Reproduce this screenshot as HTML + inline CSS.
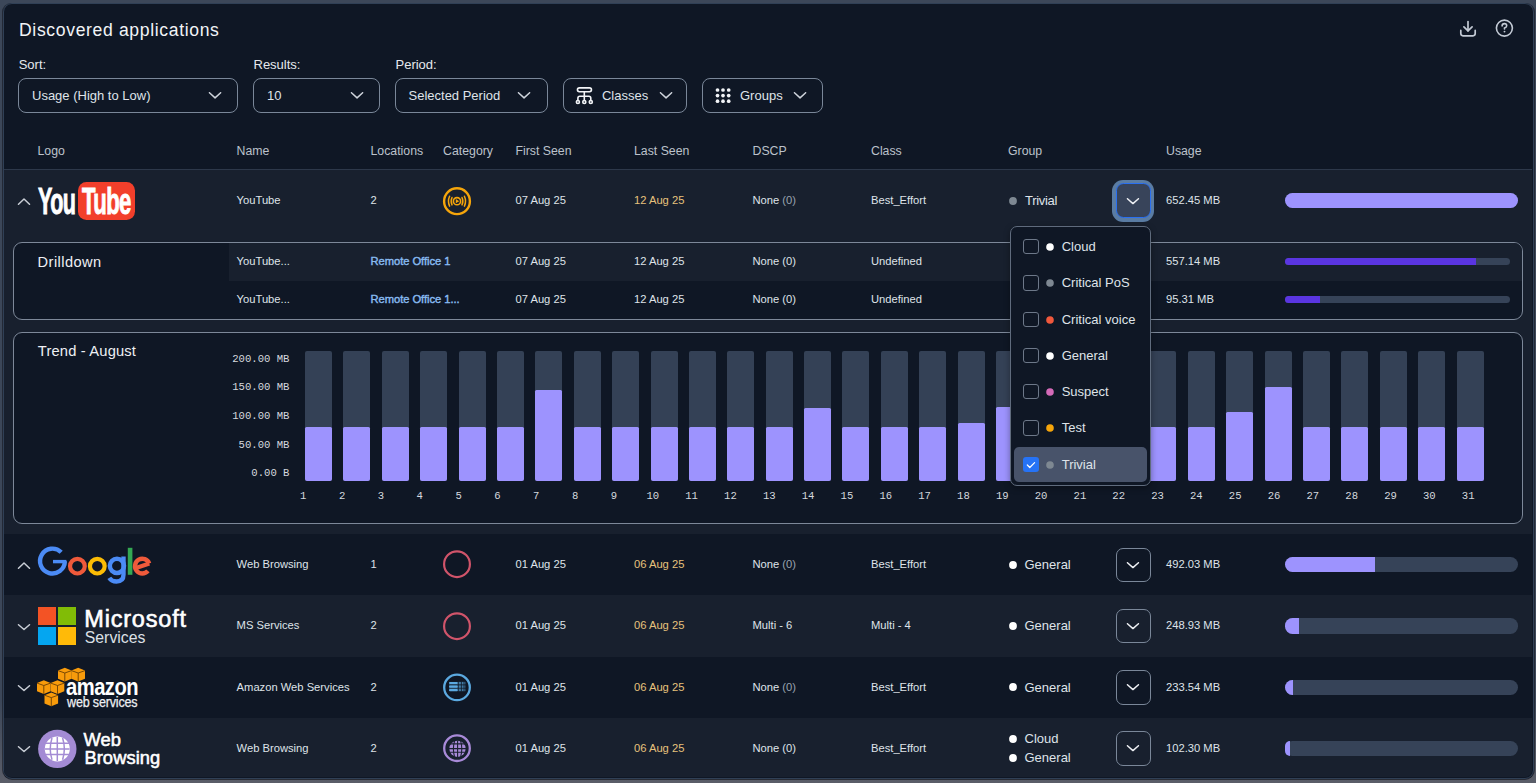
<!DOCTYPE html><html><head><meta charset="utf-8"><style>
html,body{margin:0;padding:0;}
body{width:1536px;height:783px;overflow:hidden;position:relative;background:linear-gradient(#3c4759 0px,#3c4759 700px,#5a5d68 783px);font-family:"Liberation Sans",sans-serif;}
.t{position:absolute;white-space:nowrap;}
.b{position:absolute;}
</style></head><body>
<div class="b" style="left:3px;top:3px;width:1530px;height:776px;background:#0f1725;border:1px solid #304056;border-radius:9px;box-sizing:border-box;width:1531px;height:776px;box-shadow:0 1px 0 rgba(10,12,20,0.6),1px 0 0 rgba(10,12,20,0.5),-1px 0 0 rgba(10,12,20,0.5);"></div>
<div class="t" style="left:19.00px;top:22.10px;font-size:17.6px;line-height:17.6px;color:#f2f4f7;font-weight:400;font-family:'Liberation Sans', sans-serif;letter-spacing:0.64px;">Discovered applications</div>
<svg class="b" style="left:1456px;top:17px;" width="24" height="24" viewBox="0 0 24 24"><g fill="none" stroke="#c3cad5" stroke-width="1.7" stroke-linecap="round" stroke-linejoin="round"><path d="M12 4.6 V13.8"/><path d="M7.9 9.9 L12 13.9 L16.1 9.9"/><path d="M4.8 13.4 V16.6 Q4.8 18.8 7 18.8 H17 Q19.2 18.8 19.2 16.6 V13.4"/></g></svg>
<svg class="b" style="left:1492px;top:16.4px;" width="24" height="24" viewBox="0 0 24 24"><g fill="none" stroke="#c3cad5" stroke-width="1.6" stroke-linecap="round"><circle cx="12.4" cy="12.1" r="8"/><path d="M10.1 9.9 Q10.1 7.6 12.4 7.6 Q14.7 7.6 14.7 9.7 Q14.7 11.2 12.5 12.1 V12.9"/></g><circle cx="12.5" cy="15.6" r="0.95" fill="#c3cad5"/></svg>
<div class="t" style="left:18.70px;top:58.00px;font-size:13px;line-height:13px;color:#e6e9ee;font-weight:400;font-family:'Liberation Sans', sans-serif;">Sort:</div>
<div class="t" style="left:253.50px;top:58.00px;font-size:13px;line-height:13px;color:#e6e9ee;font-weight:400;font-family:'Liberation Sans', sans-serif;">Results:</div>
<div class="t" style="left:395.50px;top:58.00px;font-size:13px;line-height:13px;color:#e6e9ee;font-weight:400;font-family:'Liberation Sans', sans-serif;">Period:</div>
<div class="b" style="left:18px;top:78px;width:220px;height:34.5px;border:1px solid #7a8799;border-radius:8px;box-sizing:border-box;"></div>
<div class="t" style="left:32.00px;top:88.80px;font-size:13px;line-height:13px;color:#dfe3e9;font-weight:400;font-family:'Liberation Sans', sans-serif;">Usage (High to Low)</div>
<svg class="b" style="left:208.15px;top:92.25px" width="14.1" height="7.3500000000000005" viewBox="0 0 14.1 7.3500000000000005"><path d="M1.45 0.725 L7.05 5.9 L12.649999999999999 0.725" fill="none" stroke="#cfd4dc" stroke-width="1.45" stroke-linecap="round" stroke-linejoin="round"/></svg>
<div class="b" style="left:253.4px;top:78px;width:126.5px;height:34.5px;border:1px solid #7a8799;border-radius:8px;box-sizing:border-box;"></div>
<div class="t" style="left:267.00px;top:88.80px;font-size:13px;line-height:13px;color:#dfe3e9;font-weight:400;font-family:'Liberation Sans', sans-serif;">10</div>
<svg class="b" style="left:349.75px;top:92.25px" width="14.1" height="7.3500000000000005" viewBox="0 0 14.1 7.3500000000000005"><path d="M1.45 0.725 L7.05 5.9 L12.649999999999999 0.725" fill="none" stroke="#cfd4dc" stroke-width="1.45" stroke-linecap="round" stroke-linejoin="round"/></svg>
<div class="b" style="left:395px;top:78px;width:152.6px;height:34.5px;border:1px solid #7a8799;border-radius:8px;box-sizing:border-box;"></div>
<div class="t" style="left:408.50px;top:88.80px;font-size:13px;line-height:13px;color:#dfe3e9;font-weight:400;font-family:'Liberation Sans', sans-serif;">Selected Period</div>
<svg class="b" style="left:517.15px;top:92.25px" width="14.1" height="7.3500000000000005" viewBox="0 0 14.1 7.3500000000000005"><path d="M1.45 0.725 L7.05 5.9 L12.649999999999999 0.725" fill="none" stroke="#cfd4dc" stroke-width="1.45" stroke-linecap="round" stroke-linejoin="round"/></svg>
<div class="b" style="left:563px;top:78px;width:124px;height:34.5px;border:1px solid #7a8799;border-radius:8px;box-sizing:border-box;"></div>
<div class="t" style="left:601.90px;top:88.80px;font-size:13px;line-height:13px;color:#dfe3e9;font-weight:400;font-family:'Liberation Sans', sans-serif;">Classes</div>
<svg class="b" style="left:658.95px;top:92.25px" width="14.1" height="7.3500000000000005" viewBox="0 0 14.1 7.3500000000000005"><path d="M1.45 0.725 L7.05 5.9 L12.649999999999999 0.725" fill="none" stroke="#cfd4dc" stroke-width="1.45" stroke-linecap="round" stroke-linejoin="round"/></svg>
<div class="b" style="left:702px;top:78px;width:120.6px;height:34.5px;border:1px solid #7a8799;border-radius:8px;box-sizing:border-box;"></div>
<div class="t" style="left:740.00px;top:88.80px;font-size:13px;line-height:13px;color:#dfe3e9;font-weight:400;font-family:'Liberation Sans', sans-serif;">Groups</div>
<svg class="b" style="left:792.95px;top:92.25px" width="14.1" height="7.3500000000000005" viewBox="0 0 14.1 7.3500000000000005"><path d="M1.45 0.725 L7.05 5.9 L12.649999999999999 0.725" fill="none" stroke="#cfd4dc" stroke-width="1.45" stroke-linecap="round" stroke-linejoin="round"/></svg>
<svg class="b" style="left:572px;top:83px;" width="24" height="24" viewBox="0 0 24 24"><g fill="none" stroke="#f2f4f7" stroke-width="1.6" stroke-linecap="round" stroke-linejoin="round"><rect x="5.45" y="4.85" width="14" height="3.9" rx="1.95"/><path d="M12.3 8.8 V17.4"/><path d="M5.9 17.4 V15.2 Q5.9 13.3 7.8 13.3 H16.9 Q18.8 13.3 18.8 15.2 V17.4"/><circle cx="5.9" cy="19" r="1.55"/><circle cx="12.3" cy="19" r="1.55"/><circle cx="18.8" cy="19" r="1.55"/></g></svg>
<svg class="b" style="left:712px;top:82px;" width="24" height="24" viewBox="0 0 24 24"><circle cx="5.5" cy="8" r="1.85" fill="#f2f4f7"/><circle cx="5.5" cy="13.6" r="1.85" fill="#f2f4f7"/><circle cx="5.5" cy="19.2" r="1.85" fill="#f2f4f7"/><circle cx="11" cy="8" r="1.85" fill="#f2f4f7"/><circle cx="11" cy="13.6" r="1.85" fill="#f2f4f7"/><circle cx="11" cy="19.2" r="1.85" fill="#f2f4f7"/><circle cx="16.7" cy="8" r="1.85" fill="#f2f4f7"/><circle cx="16.7" cy="13.6" r="1.85" fill="#f2f4f7"/><circle cx="16.7" cy="19.2" r="1.85" fill="#f2f4f7"/></svg>
<div class="t" style="left:37.50px;top:144.89px;font-size:12.3px;line-height:12.3px;color:#bcc2cb;font-weight:400;font-family:'Liberation Sans', sans-serif;">Logo</div>
<div class="t" style="left:236.60px;top:144.89px;font-size:12.3px;line-height:12.3px;color:#bcc2cb;font-weight:400;font-family:'Liberation Sans', sans-serif;">Name</div>
<div class="t" style="left:370.50px;top:144.89px;font-size:12.3px;line-height:12.3px;color:#bcc2cb;font-weight:400;font-family:'Liberation Sans', sans-serif;">Locations</div>
<div class="t" style="left:443.10px;top:144.89px;font-size:12.3px;line-height:12.3px;color:#bcc2cb;font-weight:400;font-family:'Liberation Sans', sans-serif;">Category</div>
<div class="t" style="left:515.50px;top:144.89px;font-size:12.3px;line-height:12.3px;color:#bcc2cb;font-weight:400;font-family:'Liberation Sans', sans-serif;">First Seen</div>
<div class="t" style="left:634.00px;top:144.89px;font-size:12.3px;line-height:12.3px;color:#bcc2cb;font-weight:400;font-family:'Liberation Sans', sans-serif;">Last Seen</div>
<div class="t" style="left:752.50px;top:144.89px;font-size:12.3px;line-height:12.3px;color:#bcc2cb;font-weight:400;font-family:'Liberation Sans', sans-serif;">DSCP</div>
<div class="t" style="left:871.00px;top:144.89px;font-size:12.3px;line-height:12.3px;color:#bcc2cb;font-weight:400;font-family:'Liberation Sans', sans-serif;">Class</div>
<div class="t" style="left:1008.00px;top:144.89px;font-size:12.3px;line-height:12.3px;color:#bcc2cb;font-weight:400;font-family:'Liberation Sans', sans-serif;">Group</div>
<div class="t" style="left:1166.00px;top:144.89px;font-size:12.3px;line-height:12.3px;color:#bcc2cb;font-weight:400;font-family:'Liberation Sans', sans-serif;">Usage</div>
<div class="b" style="left:4px;top:169px;width:1528px;height:1px;background:#2d384a;"></div>
<div class="b" style="left:4px;top:170px;width:1528px;height:364px;background:#18202e;"></div>
<div class="b" style="left:4px;top:534px;width:1528px;height:61px;background:#0f1725;"></div>
<div class="b" style="left:4px;top:595px;width:1528px;height:62px;background:#18202e;"></div>
<div class="b" style="left:4px;top:657px;width:1528px;height:61px;background:#0f1725;"></div>
<div class="b" style="left:4px;top:718px;width:1528px;height:59px;background:#18202e;border-radius:0 0 7px 7px;"></div>
<svg class="b" style="left:17.00px;top:198.25px" width="14.0" height="7.0" viewBox="0 0 14.0 7.0"><path d="M1.5 6.25 L7.0 1.05 L12.5 6.25" fill="none" stroke="#c9ced6" stroke-width="1.5" stroke-linecap="round" stroke-linejoin="round"/></svg>
<div class="t" style="left:37.60px;top:183.73px;font-size:36px;line-height:36px;color:#ffffff;font-weight:700;font-family:'Liberation Sans', sans-serif;transform:scaleX(0.6);transform-origin:0 0;letter-spacing:-1px;-webkit-text-stroke:0.9px #fff;">You</div>
<div class="b" style="left:77.9px;top:181.5px;width:57px;height:38.4px;background:#f23f2b;border-radius:8.5px;"></div>
<div class="t" style="left:82.00px;top:183.53px;font-size:36px;line-height:36px;color:#ffffff;font-weight:700;font-family:'Liberation Sans', sans-serif;transform:scaleX(0.615);transform-origin:0 0;letter-spacing:-1px;-webkit-text-stroke:0.9px #fff;">Tube</div>
<div class="t" style="left:236.60px;top:195.22px;font-size:11.2px;line-height:11.2px;color:#dfe3e9;font-weight:400;font-family:'Liberation Sans', sans-serif;">YouTube</div>
<div class="t" style="left:370.50px;top:195.22px;font-size:11.2px;line-height:11.2px;color:#dfe3e9;font-weight:400;font-family:'Liberation Sans', sans-serif;">2</div>
<div class="t" style="left:515.50px;top:195.22px;font-size:11.2px;line-height:11.2px;color:#dfe3e9;font-weight:400;font-family:'Liberation Sans', sans-serif;">07 Aug 25</div>
<div class="t" style="left:634.00px;top:195.22px;font-size:11.2px;line-height:11.2px;color:#e6c27c;font-weight:400;font-family:'Liberation Sans', sans-serif;">12 Aug 25</div>
<div class="t" style="left:752.50px;top:195.22px;font-size:11.2px;line-height:11.2px;color:#dfe3e9;font-weight:400;font-family:'Liberation Sans', sans-serif;">None <span style="color:#9aa3af">(0)</span></div>
<div class="t" style="left:871.00px;top:195.22px;font-size:11.2px;line-height:11.2px;color:#dfe3e9;font-weight:400;font-family:'Liberation Sans', sans-serif;">Best_Effort</div>
<div class="t" style="left:1166.00px;top:195.22px;font-size:11.2px;line-height:11.2px;color:#dfe3e9;font-weight:400;font-family:'Liberation Sans', sans-serif;">652.45 MB</div>
<svg class="b" style="left:441px;top:184.5px;" width="32" height="32" viewBox="0 0 32 32"><g fill="none" stroke="#f5a50b"><circle cx="16" cy="16.2" r="12.9" stroke-width="2.4"/><circle cx="16" cy="16.2" r="3.6" stroke-width="1.6"/><path d="M11 12.5 Q9.2 16.2 11 19.9" stroke-width="1.5" stroke-linecap="round"/><path d="M21 12.5 Q22.8 16.2 21 19.9" stroke-width="1.5" stroke-linecap="round"/><path d="M8.6 11.3 Q6.3 16.2 8.6 21.1" stroke-width="1.5" stroke-linecap="round"/><path d="M23.4 11.3 Q25.7 16.2 23.4 21.1" stroke-width="1.5" stroke-linecap="round"/></g><path d="M14.8 14.1 L18.2 16.2 L14.8 18.3 Z" fill="#f5a50b"/></svg>
<svg class="b" style="left:1007px;top:194.7px" width="12" height="12"><circle cx="6" cy="6" r="3.9" fill="#7e8892"/></svg>
<div class="t" style="left:1025.00px;top:194.00px;font-size:13px;line-height:13px;color:#dfe3e9;font-weight:400;font-family:'Liberation Sans', sans-serif;letter-spacing:-0.3px;">Trivial</div>
<div class="b" style="left:1112.3px;top:179.8px;width:42px;height:42px;background:#5a7ca3;border-radius:11px;"></div>
<div class="b" style="left:1116px;top:183.2px;width:34.8px;height:34.8px;background:#38445a;border:1.6px solid #2a70f2;border-radius:7.5px;box-sizing:border-box;"></div>
<svg class="b" style="left:1126.25px;top:198.00px" width="13.9" height="7.05" viewBox="0 0 13.9 7.05"><path d="M1.45 0.725 L6.95 5.6 L12.45 0.725" fill="none" stroke="#eef0f4" stroke-width="1.45" stroke-linecap="round" stroke-linejoin="round"/></svg>
<div class="b" style="left:1284.5px;top:193.0px;width:233.70000000000005px;height:15.2px;background:#364358;border-radius:7.6px;overflow:hidden;"></div>
<div class="b" style="left:1284.5px;top:193.0px;width:233.70000000000005px;height:15.2px;background:#9d93fe;border-radius:7.6px 0 0 7.6px;border-radius:7.6px;"></div>
<div class="b" style="left:13px;top:242px;width:1510px;height:78px;background:#0f1725;border:1px solid #7d8899;border-radius:9px;box-sizing:border-box;"></div>
<div class="b" style="left:228.5px;top:243px;width:1293.5px;height:38px;background:#18202e;border-radius:0 8px 0 0;"></div>
<div class="t" style="left:37.60px;top:254.94px;font-size:14.6px;line-height:14.6px;color:#eef0f4;font-weight:400;font-family:'Liberation Sans', sans-serif;letter-spacing:0.45px;">Drilldown</div>
<div class="t" style="left:236.60px;top:256.02px;font-size:11.2px;line-height:11.2px;color:#dfe3e9;font-weight:400;font-family:'Liberation Sans', sans-serif;">YouTube...</div>
<div class="t" style="left:370.50px;top:256.02px;font-size:11.2px;line-height:11.2px;color:#88bbf1;font-weight:400;font-family:'Liberation Sans', sans-serif;letter-spacing:-0.05px;-webkit-text-stroke:0.4px #88bbf1;">Remote Office 1</div>
<div class="t" style="left:515.50px;top:256.02px;font-size:11.2px;line-height:11.2px;color:#dfe3e9;font-weight:400;font-family:'Liberation Sans', sans-serif;">07 Aug 25</div>
<div class="t" style="left:634.00px;top:256.02px;font-size:11.2px;line-height:11.2px;color:#dfe3e9;font-weight:400;font-family:'Liberation Sans', sans-serif;">12 Aug 25</div>
<div class="t" style="left:752.50px;top:256.02px;font-size:11.2px;line-height:11.2px;color:#dfe3e9;font-weight:400;font-family:'Liberation Sans', sans-serif;">None (0)</div>
<div class="t" style="left:871.00px;top:256.02px;font-size:11.2px;line-height:11.2px;color:#dfe3e9;font-weight:400;font-family:'Liberation Sans', sans-serif;">Undefined</div>
<div class="t" style="left:1166.00px;top:256.02px;font-size:11.2px;line-height:11.2px;color:#dfe3e9;font-weight:400;font-family:'Liberation Sans', sans-serif;">557.14 MB</div>
<div class="b" style="left:1284.8px;top:257.6px;width:225.5px;height:7.8px;background:#364358;border-radius:4px;"></div>
<div class="b" style="left:1284.8px;top:257.6px;width:191.20000000000005px;height:7.8px;background:#5a35e1;border-radius:4px 0 0 4px;"></div>
<div class="t" style="left:236.60px;top:294.02px;font-size:11.2px;line-height:11.2px;color:#dfe3e9;font-weight:400;font-family:'Liberation Sans', sans-serif;">YouTube...</div>
<div class="t" style="left:370.50px;top:294.02px;font-size:11.2px;line-height:11.2px;color:#88bbf1;font-weight:400;font-family:'Liberation Sans', sans-serif;letter-spacing:-0.05px;-webkit-text-stroke:0.4px #88bbf1;">Remote Office 1...</div>
<div class="t" style="left:515.50px;top:294.02px;font-size:11.2px;line-height:11.2px;color:#dfe3e9;font-weight:400;font-family:'Liberation Sans', sans-serif;">07 Aug 25</div>
<div class="t" style="left:634.00px;top:294.02px;font-size:11.2px;line-height:11.2px;color:#dfe3e9;font-weight:400;font-family:'Liberation Sans', sans-serif;">12 Aug 25</div>
<div class="t" style="left:752.50px;top:294.02px;font-size:11.2px;line-height:11.2px;color:#dfe3e9;font-weight:400;font-family:'Liberation Sans', sans-serif;">None (0)</div>
<div class="t" style="left:871.00px;top:294.02px;font-size:11.2px;line-height:11.2px;color:#dfe3e9;font-weight:400;font-family:'Liberation Sans', sans-serif;">Undefined</div>
<div class="t" style="left:1166.00px;top:294.02px;font-size:11.2px;line-height:11.2px;color:#dfe3e9;font-weight:400;font-family:'Liberation Sans', sans-serif;">95.31 MB</div>
<div class="b" style="left:1284.8px;top:295.6px;width:225.5px;height:7.8px;background:#364358;border-radius:4px;"></div>
<div class="b" style="left:1284.8px;top:295.6px;width:35.200000000000045px;height:7.8px;background:#5a35e1;border-radius:4px 0 0 4px;"></div>
<div class="b" style="left:13px;top:331.5px;width:1510px;height:192.5px;background:#0f1725;border:1px solid #7d8899;border-radius:9px;box-sizing:border-box;"></div>
<div class="t" style="left:37.80px;top:344.16px;font-size:14.7px;line-height:14.7px;color:#eef0f4;font-weight:400;font-family:'Liberation Sans', sans-serif;letter-spacing:0.18px;">Trend - August</div>
<div class="t" style="left:232.26px;top:353.73px;font-size:10.6px;line-height:10.6px;color:#d5d9df;font-weight:400;font-family:'Liberation Mono', monospace;">200.00 MB</div>
<div class="t" style="left:232.26px;top:382.38px;font-size:10.6px;line-height:10.6px;color:#d5d9df;font-weight:400;font-family:'Liberation Mono', monospace;">150.00 MB</div>
<div class="t" style="left:232.26px;top:411.03px;font-size:10.6px;line-height:10.6px;color:#d5d9df;font-weight:400;font-family:'Liberation Mono', monospace;">100.00 MB</div>
<div class="t" style="left:238.62px;top:439.68px;font-size:10.6px;line-height:10.6px;color:#d5d9df;font-weight:400;font-family:'Liberation Mono', monospace;">50.00 MB</div>
<div class="t" style="left:251.34px;top:468.33px;font-size:10.6px;line-height:10.6px;color:#d5d9df;font-weight:400;font-family:'Liberation Mono', monospace;">0.00 B</div>
<div class="b" style="left:305.1px;top:350.9px;width:27px;height:129.8px;background:#344156;border-radius:2px;"></div>
<div class="b" style="left:305.1px;top:427.3px;width:27px;height:53.39999999999998px;background:#9d93fe;border-radius:1.5px 1.5px 2px 2px;"></div>
<div class="t" style="left:300.12px;top:491.43px;font-size:10.6px;line-height:10.6px;color:#d5d9df;font-weight:400;font-family:'Liberation Mono', monospace;">1</div>
<div class="b" style="left:343.48px;top:350.9px;width:27px;height:129.8px;background:#344156;border-radius:2px;"></div>
<div class="b" style="left:343.48px;top:427.3px;width:27px;height:53.39999999999998px;background:#9d93fe;border-radius:1.5px 1.5px 2px 2px;"></div>
<div class="t" style="left:338.95px;top:491.43px;font-size:10.6px;line-height:10.6px;color:#d5d9df;font-weight:400;font-family:'Liberation Mono', monospace;">2</div>
<div class="b" style="left:381.86px;top:350.9px;width:27px;height:129.8px;background:#344156;border-radius:2px;"></div>
<div class="b" style="left:381.86px;top:427.3px;width:27px;height:53.39999999999998px;background:#9d93fe;border-radius:1.5px 1.5px 2px 2px;"></div>
<div class="t" style="left:377.78px;top:491.43px;font-size:10.6px;line-height:10.6px;color:#d5d9df;font-weight:400;font-family:'Liberation Mono', monospace;">3</div>
<div class="b" style="left:420.24px;top:350.9px;width:27px;height:129.8px;background:#344156;border-radius:2px;"></div>
<div class="b" style="left:420.24px;top:427.3px;width:27px;height:53.39999999999998px;background:#9d93fe;border-radius:1.5px 1.5px 2px 2px;"></div>
<div class="t" style="left:416.61px;top:491.43px;font-size:10.6px;line-height:10.6px;color:#d5d9df;font-weight:400;font-family:'Liberation Mono', monospace;">4</div>
<div class="b" style="left:458.62px;top:350.9px;width:27px;height:129.8px;background:#344156;border-radius:2px;"></div>
<div class="b" style="left:458.62px;top:427.3px;width:27px;height:53.39999999999998px;background:#9d93fe;border-radius:1.5px 1.5px 2px 2px;"></div>
<div class="t" style="left:455.44px;top:491.43px;font-size:10.6px;line-height:10.6px;color:#d5d9df;font-weight:400;font-family:'Liberation Mono', monospace;">5</div>
<div class="b" style="left:497.0px;top:350.9px;width:27px;height:129.8px;background:#344156;border-radius:2px;"></div>
<div class="b" style="left:497.0px;top:427.3px;width:27px;height:53.39999999999998px;background:#9d93fe;border-radius:1.5px 1.5px 2px 2px;"></div>
<div class="t" style="left:494.27px;top:491.43px;font-size:10.6px;line-height:10.6px;color:#d5d9df;font-weight:400;font-family:'Liberation Mono', monospace;">6</div>
<div class="b" style="left:535.38px;top:350.9px;width:27px;height:129.8px;background:#344156;border-radius:2px;"></div>
<div class="b" style="left:535.38px;top:389.8px;width:27px;height:90.89999999999998px;background:#9d93fe;border-radius:1.5px 1.5px 2px 2px;"></div>
<div class="t" style="left:533.10px;top:491.43px;font-size:10.6px;line-height:10.6px;color:#d5d9df;font-weight:400;font-family:'Liberation Mono', monospace;">7</div>
<div class="b" style="left:573.76px;top:350.9px;width:27px;height:129.8px;background:#344156;border-radius:2px;"></div>
<div class="b" style="left:573.76px;top:427.3px;width:27px;height:53.39999999999998px;background:#9d93fe;border-radius:1.5px 1.5px 2px 2px;"></div>
<div class="t" style="left:571.93px;top:491.43px;font-size:10.6px;line-height:10.6px;color:#d5d9df;font-weight:400;font-family:'Liberation Mono', monospace;">8</div>
<div class="b" style="left:612.14px;top:350.9px;width:27px;height:129.8px;background:#344156;border-radius:2px;"></div>
<div class="b" style="left:612.14px;top:427.3px;width:27px;height:53.39999999999998px;background:#9d93fe;border-radius:1.5px 1.5px 2px 2px;"></div>
<div class="t" style="left:610.76px;top:491.43px;font-size:10.6px;line-height:10.6px;color:#d5d9df;font-weight:400;font-family:'Liberation Mono', monospace;">9</div>
<div class="b" style="left:650.52px;top:350.9px;width:27px;height:129.8px;background:#344156;border-radius:2px;"></div>
<div class="b" style="left:650.52px;top:427.3px;width:27px;height:53.39999999999998px;background:#9d93fe;border-radius:1.5px 1.5px 2px 2px;"></div>
<div class="t" style="left:646.41px;top:491.43px;font-size:10.6px;line-height:10.6px;color:#d5d9df;font-weight:400;font-family:'Liberation Mono', monospace;">10</div>
<div class="b" style="left:688.9px;top:350.9px;width:27px;height:129.8px;background:#344156;border-radius:2px;"></div>
<div class="b" style="left:688.9px;top:427.3px;width:27px;height:53.39999999999998px;background:#9d93fe;border-radius:1.5px 1.5px 2px 2px;"></div>
<div class="t" style="left:685.24px;top:491.43px;font-size:10.6px;line-height:10.6px;color:#d5d9df;font-weight:400;font-family:'Liberation Mono', monospace;">11</div>
<div class="b" style="left:727.28px;top:350.9px;width:27px;height:129.8px;background:#344156;border-radius:2px;"></div>
<div class="b" style="left:727.28px;top:427.3px;width:27px;height:53.39999999999998px;background:#9d93fe;border-radius:1.5px 1.5px 2px 2px;"></div>
<div class="t" style="left:724.07px;top:491.43px;font-size:10.6px;line-height:10.6px;color:#d5d9df;font-weight:400;font-family:'Liberation Mono', monospace;">12</div>
<div class="b" style="left:765.66px;top:350.9px;width:27px;height:129.8px;background:#344156;border-radius:2px;"></div>
<div class="b" style="left:765.66px;top:427.3px;width:27px;height:53.39999999999998px;background:#9d93fe;border-radius:1.5px 1.5px 2px 2px;"></div>
<div class="t" style="left:762.90px;top:491.43px;font-size:10.6px;line-height:10.6px;color:#d5d9df;font-weight:400;font-family:'Liberation Mono', monospace;">13</div>
<div class="b" style="left:804.04px;top:350.9px;width:27px;height:129.8px;background:#344156;border-radius:2px;"></div>
<div class="b" style="left:804.04px;top:408px;width:27px;height:72.69999999999999px;background:#9d93fe;border-radius:1.5px 1.5px 2px 2px;"></div>
<div class="t" style="left:801.73px;top:491.43px;font-size:10.6px;line-height:10.6px;color:#d5d9df;font-weight:400;font-family:'Liberation Mono', monospace;">14</div>
<div class="b" style="left:842.42px;top:350.9px;width:27px;height:129.8px;background:#344156;border-radius:2px;"></div>
<div class="b" style="left:842.42px;top:427.3px;width:27px;height:53.39999999999998px;background:#9d93fe;border-radius:1.5px 1.5px 2px 2px;"></div>
<div class="t" style="left:840.56px;top:491.43px;font-size:10.6px;line-height:10.6px;color:#d5d9df;font-weight:400;font-family:'Liberation Mono', monospace;">15</div>
<div class="b" style="left:880.8px;top:350.9px;width:27px;height:129.8px;background:#344156;border-radius:2px;"></div>
<div class="b" style="left:880.8px;top:427.3px;width:27px;height:53.39999999999998px;background:#9d93fe;border-radius:1.5px 1.5px 2px 2px;"></div>
<div class="t" style="left:879.39px;top:491.43px;font-size:10.6px;line-height:10.6px;color:#d5d9df;font-weight:400;font-family:'Liberation Mono', monospace;">16</div>
<div class="b" style="left:919.18px;top:350.9px;width:27px;height:129.8px;background:#344156;border-radius:2px;"></div>
<div class="b" style="left:919.18px;top:427.3px;width:27px;height:53.39999999999998px;background:#9d93fe;border-radius:1.5px 1.5px 2px 2px;"></div>
<div class="t" style="left:918.22px;top:491.43px;font-size:10.6px;line-height:10.6px;color:#d5d9df;font-weight:400;font-family:'Liberation Mono', monospace;">17</div>
<div class="b" style="left:957.56px;top:350.9px;width:27px;height:129.8px;background:#344156;border-radius:2px;"></div>
<div class="b" style="left:957.56px;top:423.3px;width:27px;height:57.39999999999998px;background:#9d93fe;border-radius:1.5px 1.5px 2px 2px;"></div>
<div class="t" style="left:957.05px;top:491.43px;font-size:10.6px;line-height:10.6px;color:#d5d9df;font-weight:400;font-family:'Liberation Mono', monospace;">18</div>
<div class="b" style="left:995.94px;top:350.9px;width:27px;height:129.8px;background:#344156;border-radius:2px;"></div>
<div class="b" style="left:995.94px;top:407px;width:27px;height:73.69999999999999px;background:#9d93fe;border-radius:1.5px 1.5px 2px 2px;"></div>
<div class="t" style="left:995.88px;top:491.43px;font-size:10.6px;line-height:10.6px;color:#d5d9df;font-weight:400;font-family:'Liberation Mono', monospace;">19</div>
<div class="b" style="left:1034.32px;top:350.9px;width:27px;height:129.8px;background:#344156;border-radius:2px;"></div>
<div class="b" style="left:1034.32px;top:427.3px;width:27px;height:53.39999999999998px;background:#9d93fe;border-radius:1.5px 1.5px 2px 2px;"></div>
<div class="t" style="left:1034.71px;top:491.43px;font-size:10.6px;line-height:10.6px;color:#d5d9df;font-weight:400;font-family:'Liberation Mono', monospace;">20</div>
<div class="b" style="left:1072.7px;top:350.9px;width:27px;height:129.8px;background:#344156;border-radius:2px;"></div>
<div class="b" style="left:1072.7px;top:427.3px;width:27px;height:53.39999999999998px;background:#9d93fe;border-radius:1.5px 1.5px 2px 2px;"></div>
<div class="t" style="left:1073.54px;top:491.43px;font-size:10.6px;line-height:10.6px;color:#d5d9df;font-weight:400;font-family:'Liberation Mono', monospace;">21</div>
<div class="b" style="left:1111.08px;top:350.9px;width:27px;height:129.8px;background:#344156;border-radius:2px;"></div>
<div class="b" style="left:1111.08px;top:427.3px;width:27px;height:53.39999999999998px;background:#9d93fe;border-radius:1.5px 1.5px 2px 2px;"></div>
<div class="t" style="left:1112.37px;top:491.43px;font-size:10.6px;line-height:10.6px;color:#d5d9df;font-weight:400;font-family:'Liberation Mono', monospace;">22</div>
<div class="b" style="left:1149.46px;top:350.9px;width:27px;height:129.8px;background:#344156;border-radius:2px;"></div>
<div class="b" style="left:1149.46px;top:427.3px;width:27px;height:53.39999999999998px;background:#9d93fe;border-radius:1.5px 1.5px 2px 2px;"></div>
<div class="t" style="left:1151.20px;top:491.43px;font-size:10.6px;line-height:10.6px;color:#d5d9df;font-weight:400;font-family:'Liberation Mono', monospace;">23</div>
<div class="b" style="left:1187.84px;top:350.9px;width:27px;height:129.8px;background:#344156;border-radius:2px;"></div>
<div class="b" style="left:1187.84px;top:427.3px;width:27px;height:53.39999999999998px;background:#9d93fe;border-radius:1.5px 1.5px 2px 2px;"></div>
<div class="t" style="left:1190.03px;top:491.43px;font-size:10.6px;line-height:10.6px;color:#d5d9df;font-weight:400;font-family:'Liberation Mono', monospace;">24</div>
<div class="b" style="left:1226.22px;top:350.9px;width:27px;height:129.8px;background:#344156;border-radius:2px;"></div>
<div class="b" style="left:1226.22px;top:412px;width:27px;height:68.69999999999999px;background:#9d93fe;border-radius:1.5px 1.5px 2px 2px;"></div>
<div class="t" style="left:1228.86px;top:491.43px;font-size:10.6px;line-height:10.6px;color:#d5d9df;font-weight:400;font-family:'Liberation Mono', monospace;">25</div>
<div class="b" style="left:1264.6px;top:350.9px;width:27px;height:129.8px;background:#344156;border-radius:2px;"></div>
<div class="b" style="left:1264.6px;top:387px;width:27px;height:93.69999999999999px;background:#9d93fe;border-radius:1.5px 1.5px 2px 2px;"></div>
<div class="t" style="left:1267.69px;top:491.43px;font-size:10.6px;line-height:10.6px;color:#d5d9df;font-weight:400;font-family:'Liberation Mono', monospace;">26</div>
<div class="b" style="left:1302.98px;top:350.9px;width:27px;height:129.8px;background:#344156;border-radius:2px;"></div>
<div class="b" style="left:1302.98px;top:427.3px;width:27px;height:53.39999999999998px;background:#9d93fe;border-radius:1.5px 1.5px 2px 2px;"></div>
<div class="t" style="left:1306.52px;top:491.43px;font-size:10.6px;line-height:10.6px;color:#d5d9df;font-weight:400;font-family:'Liberation Mono', monospace;">27</div>
<div class="b" style="left:1341.36px;top:350.9px;width:27px;height:129.8px;background:#344156;border-radius:2px;"></div>
<div class="b" style="left:1341.36px;top:427.3px;width:27px;height:53.39999999999998px;background:#9d93fe;border-radius:1.5px 1.5px 2px 2px;"></div>
<div class="t" style="left:1345.35px;top:491.43px;font-size:10.6px;line-height:10.6px;color:#d5d9df;font-weight:400;font-family:'Liberation Mono', monospace;">28</div>
<div class="b" style="left:1379.74px;top:350.9px;width:27px;height:129.8px;background:#344156;border-radius:2px;"></div>
<div class="b" style="left:1379.74px;top:427.3px;width:27px;height:53.39999999999998px;background:#9d93fe;border-radius:1.5px 1.5px 2px 2px;"></div>
<div class="t" style="left:1384.18px;top:491.43px;font-size:10.6px;line-height:10.6px;color:#d5d9df;font-weight:400;font-family:'Liberation Mono', monospace;">29</div>
<div class="b" style="left:1418.12px;top:350.9px;width:27px;height:129.8px;background:#344156;border-radius:2px;"></div>
<div class="b" style="left:1418.12px;top:427.3px;width:27px;height:53.39999999999998px;background:#9d93fe;border-radius:1.5px 1.5px 2px 2px;"></div>
<div class="t" style="left:1423.01px;top:491.43px;font-size:10.6px;line-height:10.6px;color:#d5d9df;font-weight:400;font-family:'Liberation Mono', monospace;">30</div>
<div class="b" style="left:1456.5px;top:350.9px;width:27px;height:129.8px;background:#344156;border-radius:2px;"></div>
<div class="b" style="left:1456.5px;top:427.3px;width:27px;height:53.39999999999998px;background:#9d93fe;border-radius:1.5px 1.5px 2px 2px;"></div>
<div class="t" style="left:1461.84px;top:491.43px;font-size:10.6px;line-height:10.6px;color:#d5d9df;font-weight:400;font-family:'Liberation Mono', monospace;">31</div>
<svg class="b" style="left:17.00px;top:562.25px" width="14.0" height="7.0" viewBox="0 0 14.0 7.0"><path d="M1.5 6.25 L7.0 1.05 L12.5 6.25" fill="none" stroke="#c9ced6" stroke-width="1.5" stroke-linecap="round" stroke-linejoin="round"/></svg>
<svg class="b" style="left:36px;top:542px;" width="120" height="46" viewBox="0 0 120 46">
<path d="M25.2 10.3 A12.4 12.4 0 1 0 28.85 19.3" fill="none" stroke="#4b8bf5" stroke-width="4.4"/>
<rect x="17" y="17.9" width="13.4" height="3.4" fill="#4b8bf5"/>
<circle cx="41.4" cy="24.15" r="7.35" fill="none" stroke="#ef5a3b" stroke-width="4.2"/>
<circle cx="61.3" cy="24.15" r="7.35" fill="none" stroke="#fbbc05" stroke-width="4.2"/>
<circle cx="80.95" cy="23.85" r="7.1" fill="none" stroke="#4b8bf5" stroke-width="4.4"/>
<path d="M87.5 14.6 V32.5 Q87.5 39.5 80.5 39.5 Q75.5 39.5 73.3 35.8" fill="none" stroke="#4b8bf5" stroke-width="4.4"/>
<rect x="91.8" y="5.8" width="4.6" height="27" fill="#34a853"/>
<path d="M99.25 26.3 L113.3 21.5" fill="none" stroke="#ef5a3b" stroke-width="4.2"/>
<path d="M113.2 21.6 A7.3 7.4 0 1 0 111.9 28.9" fill="none" stroke="#ef5a3b" stroke-width="4.4"/>
</svg>
<div class="t" style="left:236.60px;top:559.02px;font-size:11.2px;line-height:11.2px;color:#dfe3e9;font-weight:400;font-family:'Liberation Sans', sans-serif;">Web Browsing</div>
<div class="t" style="left:370.50px;top:559.02px;font-size:11.2px;line-height:11.2px;color:#dfe3e9;font-weight:400;font-family:'Liberation Sans', sans-serif;">1</div>
<div class="t" style="left:515.50px;top:559.02px;font-size:11.2px;line-height:11.2px;color:#dfe3e9;font-weight:400;font-family:'Liberation Sans', sans-serif;">01 Aug 25</div>
<div class="t" style="left:634.00px;top:559.02px;font-size:11.2px;line-height:11.2px;color:#e6c27c;font-weight:400;font-family:'Liberation Sans', sans-serif;">06 Aug 25</div>
<div class="t" style="left:752.50px;top:559.02px;font-size:11.2px;line-height:11.2px;color:#dfe3e9;font-weight:400;font-family:'Liberation Sans', sans-serif;">None <span style="color:#9aa3af">(0)</span></div>
<div class="t" style="left:871.00px;top:559.02px;font-size:11.2px;line-height:11.2px;color:#dfe3e9;font-weight:400;font-family:'Liberation Sans', sans-serif;">Best_Effort</div>
<div class="t" style="left:1166.00px;top:559.02px;font-size:11.2px;line-height:11.2px;color:#dfe3e9;font-weight:400;font-family:'Liberation Sans', sans-serif;">492.03 MB</div>
<svg class="b" style="left:441px;top:548.3px;" width="32" height="32" viewBox="0 0 32 32"><circle cx="16" cy="16.2" r="12.9" fill="none" stroke="#d0546a" stroke-width="2.2"/></svg>
<svg class="b" style="left:1006.8px;top:558.5px" width="12" height="12"><circle cx="6" cy="6" r="3.9" fill="#ffffff"/></svg>
<div class="t" style="left:1024.50px;top:557.90px;font-size:13px;line-height:13px;color:#dfe3e9;font-weight:400;font-family:'Liberation Sans', sans-serif;">General</div>
<div class="b" style="left:1116px;top:547.8px;width:34.7px;height:34.6px;border:1px solid #7a8799;border-radius:7px;box-sizing:border-box;"></div>
<svg class="b" style="left:1126.25px;top:561.80px" width="13.9" height="7.05" viewBox="0 0 13.9 7.05"><path d="M1.45 0.725 L6.95 5.6 L12.45 0.725" fill="none" stroke="#eef0f4" stroke-width="1.45" stroke-linecap="round" stroke-linejoin="round"/></svg>
<div class="b" style="left:1284.5px;top:557.2px;width:233.70000000000005px;height:15.2px;background:#364358;border-radius:7.6px;overflow:hidden;"></div>
<div class="b" style="left:1284.5px;top:557.2px;width:90.5px;height:15.2px;background:#9d93fe;border-radius:7.6px 0 0 7.6px;"></div>
<svg class="b" style="left:17.00px;top:623.75px" width="14.0" height="7.0" viewBox="0 0 14.0 7.0"><path d="M1.5 0.75 L7.0 5.5 L12.5 0.75" fill="none" stroke="#c9ced6" stroke-width="1.5" stroke-linecap="round" stroke-linejoin="round"/></svg>
<div class="b" style="left:37.7px;top:607.2px;width:18.3px;height:18px;background:#f35325;"></div>
<div class="b" style="left:57.7px;top:607.2px;width:18.2px;height:18px;background:#81bc06;"></div>
<div class="b" style="left:37.7px;top:627.1px;width:18.3px;height:18.1px;background:#05a6f0;"></div>
<div class="b" style="left:57.7px;top:627.1px;width:18.2px;height:18.1px;background:#ffba08;"></div>
<div class="t" style="left:84.30px;top:608.21px;font-size:23.5px;line-height:23.5px;color:#ffffff;font-weight:400;font-family:'Liberation Sans', sans-serif;letter-spacing:0.8px;-webkit-text-stroke:0.6px #fff;">Microsoft</div>
<div class="t" style="left:84.80px;top:629.93px;font-size:15.8px;line-height:15.8px;color:#dde1e6;font-weight:400;font-family:'Liberation Sans', sans-serif;letter-spacing:0px;">Services</div>
<div class="t" style="left:236.60px;top:620.22px;font-size:11.2px;line-height:11.2px;color:#dfe3e9;font-weight:400;font-family:'Liberation Sans', sans-serif;">MS Services</div>
<div class="t" style="left:370.50px;top:620.22px;font-size:11.2px;line-height:11.2px;color:#dfe3e9;font-weight:400;font-family:'Liberation Sans', sans-serif;">2</div>
<div class="t" style="left:515.50px;top:620.22px;font-size:11.2px;line-height:11.2px;color:#dfe3e9;font-weight:400;font-family:'Liberation Sans', sans-serif;">01 Aug 25</div>
<div class="t" style="left:634.00px;top:620.22px;font-size:11.2px;line-height:11.2px;color:#e6c27c;font-weight:400;font-family:'Liberation Sans', sans-serif;">06 Aug 25</div>
<div class="t" style="left:752.50px;top:620.22px;font-size:11.2px;line-height:11.2px;color:#dfe3e9;font-weight:400;font-family:'Liberation Sans', sans-serif;">Multi - 6</div>
<div class="t" style="left:871.00px;top:620.22px;font-size:11.2px;line-height:11.2px;color:#dfe3e9;font-weight:400;font-family:'Liberation Sans', sans-serif;">Multi - 4</div>
<div class="t" style="left:1166.00px;top:620.22px;font-size:11.2px;line-height:11.2px;color:#dfe3e9;font-weight:400;font-family:'Liberation Sans', sans-serif;">248.93 MB</div>
<svg class="b" style="left:441px;top:609.5px;" width="32" height="32" viewBox="0 0 32 32"><circle cx="16" cy="16.2" r="12.9" fill="none" stroke="#d0546a" stroke-width="2.2"/></svg>
<svg class="b" style="left:1006.8px;top:619.7px" width="12" height="12"><circle cx="6" cy="6" r="3.9" fill="#ffffff"/></svg>
<div class="t" style="left:1024.50px;top:619.10px;font-size:13px;line-height:13px;color:#dfe3e9;font-weight:400;font-family:'Liberation Sans', sans-serif;">General</div>
<div class="b" style="left:1116px;top:608.5px;width:34.7px;height:34.6px;border:1px solid #7a8799;border-radius:7px;box-sizing:border-box;"></div>
<svg class="b" style="left:1126.25px;top:622.50px" width="13.9" height="7.05" viewBox="0 0 13.9 7.05"><path d="M1.45 0.725 L6.95 5.6 L12.45 0.725" fill="none" stroke="#eef0f4" stroke-width="1.45" stroke-linecap="round" stroke-linejoin="round"/></svg>
<div class="b" style="left:1284.5px;top:618.4000000000001px;width:233.70000000000005px;height:15.2px;background:#364358;border-radius:7.6px;overflow:hidden;"></div>
<div class="b" style="left:1284.5px;top:618.4000000000001px;width:14.099999999999909px;height:15.2px;background:#9d93fe;border-radius:7.6px 0 0 7.6px;"></div>
<svg class="b" style="left:17.00px;top:685.05px" width="14.0" height="7.0" viewBox="0 0 14.0 7.0"><path d="M1.5 0.75 L7.0 5.5 L12.5 0.75" fill="none" stroke="#c9ced6" stroke-width="1.5" stroke-linecap="round" stroke-linejoin="round"/></svg>
<svg class="b" style="left:34px;top:664px;" width="60" height="46" viewBox="0 0 60 46"><g transform="translate(24,3.8)"><path d="M0 2.8 L6.8 0 L13.6 2.8 V11 L6.8 13.8 L0 11 Z" fill="#f89b0b"/><path d="M0 2.8 L6.8 5.2 L13.6 2.8 M6.8 5.2 V13.8" fill="none" stroke="#6b3f05" stroke-width="0.9"/></g><g transform="translate(37.4,3.8)"><path d="M0 2.8 L6.8 0 L13.6 2.8 V11 L6.8 13.8 L0 11 Z" fill="#f89b0b"/><path d="M0 2.8 L6.8 5.2 L13.6 2.8 M6.8 5.2 V13.8" fill="none" stroke="#6b3f05" stroke-width="0.9"/></g><g transform="translate(3,16.3)"><path d="M0 2.8 L6.8 0 L13.6 2.8 V11 L6.8 13.8 L0 11 Z" fill="#f89b0b"/><path d="M0 2.8 L6.8 5.2 L13.6 2.8 M6.8 5.2 V13.8" fill="none" stroke="#6b3f05" stroke-width="0.9"/></g><g transform="translate(16.7,16.3)"><path d="M0 2.8 L6.8 0 L13.6 2.8 V11 L6.8 13.8 L0 11 Z" fill="#f89b0b"/><path d="M0 2.8 L6.8 5.2 L13.6 2.8 M6.8 5.2 V13.8" fill="none" stroke="#6b3f05" stroke-width="0.9"/></g><g transform="translate(10.5,28.4)"><path d="M0 2.8 L6.8 0 L13.6 2.8 V11 L6.8 13.8 L0 11 Z" fill="#f89b0b"/><path d="M0 2.8 L6.8 5.2 L13.6 2.8 M6.8 5.2 V13.8" fill="none" stroke="#6b3f05" stroke-width="0.9"/></g></svg>
<div class="t" style="left:65.50px;top:675.38px;font-size:24px;line-height:24px;color:#ffffff;font-weight:700;font-family:'Liberation Sans', sans-serif;transform:scaleX(0.84);transform-origin:0 0;letter-spacing:-0.6px;">amazon</div>
<div class="t" style="left:66.50px;top:696.32px;font-size:13.8px;line-height:13.8px;color:#eef0f3;font-weight:400;font-family:'Liberation Sans', sans-serif;transform:scaleX(0.91);transform-origin:0 0;letter-spacing:-0.2px;-webkit-text-stroke:0.25px #eef0f3;">web services</div>
<div class="t" style="left:236.60px;top:681.72px;font-size:11.2px;line-height:11.2px;color:#dfe3e9;font-weight:400;font-family:'Liberation Sans', sans-serif;">Amazon Web Services</div>
<div class="t" style="left:370.50px;top:681.72px;font-size:11.2px;line-height:11.2px;color:#dfe3e9;font-weight:400;font-family:'Liberation Sans', sans-serif;">2</div>
<div class="t" style="left:515.50px;top:681.72px;font-size:11.2px;line-height:11.2px;color:#dfe3e9;font-weight:400;font-family:'Liberation Sans', sans-serif;">01 Aug 25</div>
<div class="t" style="left:634.00px;top:681.72px;font-size:11.2px;line-height:11.2px;color:#e6c27c;font-weight:400;font-family:'Liberation Sans', sans-serif;">06 Aug 25</div>
<div class="t" style="left:752.50px;top:681.72px;font-size:11.2px;line-height:11.2px;color:#dfe3e9;font-weight:400;font-family:'Liberation Sans', sans-serif;">None <span style="color:#9aa3af">(0)</span></div>
<div class="t" style="left:871.00px;top:681.72px;font-size:11.2px;line-height:11.2px;color:#dfe3e9;font-weight:400;font-family:'Liberation Sans', sans-serif;">Best_Effort</div>
<div class="t" style="left:1166.00px;top:681.72px;font-size:11.2px;line-height:11.2px;color:#dfe3e9;font-weight:400;font-family:'Liberation Sans', sans-serif;">233.54 MB</div>
<svg class="b" style="left:441px;top:671px;" width="32" height="32" viewBox="0 0 32 32"><circle cx="16" cy="16.4" r="12.8" fill="none" stroke="#5ba9e0" stroke-width="2.3"/><rect x="8" y="10.9" width="16.3" height="9.2" fill="#5ba9e0" opacity="0.3"/><g fill="#5ba9e0"><rect x="8" y="10.9" width="9" height="2.1" rx="1"/><rect x="8" y="14.6" width="9" height="2.1" rx="1"/><rect x="8" y="18.1" width="9" height="2.1" rx="1"/></g><g fill="#5ba9e0" opacity="0.55"><rect x="17" y="10.9" width="7.3" height="2.1"/><rect x="17" y="14.6" width="7.3" height="2.1"/><rect x="17" y="18.1" width="7.3" height="2.1"/></g><g stroke="#0f1725" stroke-width="0.8"><path d="M17.3 10.5 V20.5 M20.4 10.5 V20.5 M23 10.5 V20.5"/></g></svg>
<svg class="b" style="left:1006.8px;top:681.2px" width="12" height="12"><circle cx="6" cy="6" r="3.9" fill="#ffffff"/></svg>
<div class="t" style="left:1024.50px;top:680.60px;font-size:13px;line-height:13px;color:#dfe3e9;font-weight:400;font-family:'Liberation Sans', sans-serif;">General</div>
<div class="b" style="left:1116px;top:670.0px;width:34.7px;height:34.6px;border:1px solid #7a8799;border-radius:7px;box-sizing:border-box;"></div>
<svg class="b" style="left:1126.25px;top:684.00px" width="13.9" height="7.05" viewBox="0 0 13.9 7.05"><path d="M1.45 0.725 L6.95 5.6 L12.45 0.725" fill="none" stroke="#eef0f4" stroke-width="1.45" stroke-linecap="round" stroke-linejoin="round"/></svg>
<div class="b" style="left:1284.5px;top:679.9000000000001px;width:233.70000000000005px;height:15.2px;background:#364358;border-radius:7.6px;overflow:hidden;"></div>
<div class="b" style="left:1284.5px;top:679.9000000000001px;width:8.400000000000091px;height:15.2px;background:#9d93fe;border-radius:7.6px 0 0 7.6px;"></div>
<svg class="b" style="left:17.00px;top:746.25px" width="14.0" height="7.0" viewBox="0 0 14.0 7.0"><path d="M1.5 0.75 L7.0 5.5 L12.5 0.75" fill="none" stroke="#c9ced6" stroke-width="1.5" stroke-linecap="round" stroke-linejoin="round"/></svg>
<svg class="b" style="left:37px;top:729px;" width="42" height="42" viewBox="0 0 42 42"><circle cx="20.3" cy="19.9" r="19.2" fill="#a38bd4"/>
<g fill="none" stroke="#ffffff"><circle cx="20.3" cy="19.9" r="11.2" stroke-width="2.6" fill="#ffffff"/></g>
<g fill="none" stroke="#a38bd4" stroke-width="1.5"><path d="M8 14.3 H32.6 M8 19.9 H32.6 M8 25.5 H32.6"/><path d="M20.3 8 V32"/><path d="M15 9 Q11.5 19.9 15 30.8"/><path d="M25.6 9 Q29.1 19.9 25.6 30.8"/></g></svg>
<div class="t" style="left:83.60px;top:731.01px;font-size:18.3px;line-height:18.3px;color:#ffffff;font-weight:400;font-family:'Liberation Sans', sans-serif;letter-spacing:0px;-webkit-text-stroke:0.55px #fff;">Web</div>
<div class="t" style="left:84.40px;top:748.81px;font-size:18.3px;line-height:18.3px;color:#ffffff;font-weight:400;font-family:'Liberation Sans', sans-serif;letter-spacing:0.1px;-webkit-text-stroke:0.55px #fff;">Browsing</div>
<div class="t" style="left:236.60px;top:742.92px;font-size:11.2px;line-height:11.2px;color:#dfe3e9;font-weight:400;font-family:'Liberation Sans', sans-serif;">Web Browsing</div>
<div class="t" style="left:370.50px;top:742.92px;font-size:11.2px;line-height:11.2px;color:#dfe3e9;font-weight:400;font-family:'Liberation Sans', sans-serif;">2</div>
<div class="t" style="left:515.50px;top:742.92px;font-size:11.2px;line-height:11.2px;color:#dfe3e9;font-weight:400;font-family:'Liberation Sans', sans-serif;">01 Aug 25</div>
<div class="t" style="left:634.00px;top:742.92px;font-size:11.2px;line-height:11.2px;color:#e6c27c;font-weight:400;font-family:'Liberation Sans', sans-serif;">06 Aug 25</div>
<div class="t" style="left:752.50px;top:742.92px;font-size:11.2px;line-height:11.2px;color:#dfe3e9;font-weight:400;font-family:'Liberation Sans', sans-serif;">None (0)</div>
<div class="t" style="left:871.00px;top:742.92px;font-size:11.2px;line-height:11.2px;color:#dfe3e9;font-weight:400;font-family:'Liberation Sans', sans-serif;">Best_Effort</div>
<div class="t" style="left:1166.00px;top:742.92px;font-size:11.2px;line-height:11.2px;color:#dfe3e9;font-weight:400;font-family:'Liberation Sans', sans-serif;">102.30 MB</div>
<svg class="b" style="left:441px;top:732.2px;" width="32" height="32" viewBox="0 0 32 32"><circle cx="16" cy="16.2" r="12.8" fill="none" stroke="#a88ad8" stroke-width="2.3"/>
<circle cx="16.5" cy="16.8" r="8.15" fill="#a88ad8"/>
<g fill="none" stroke="#1b2231" stroke-width="1.1"><path d="M8 11.9 H25 M8 16.6 H25 M8 20.3 H25 M16.6 8.5 V25"/><path d="M13.6 8.8 Q11.2 16.8 13.6 24.8 M19.6 8.8 Q22 16.8 19.6 24.8"/></g></svg>
<svg class="b" style="left:1006.8px;top:732.7px" width="12" height="12"><circle cx="6" cy="6" r="3.9" fill="#ffffff"/></svg>
<div class="t" style="left:1024.50px;top:732.20px;font-size:13px;line-height:13px;color:#dfe3e9;font-weight:400;font-family:'Liberation Sans', sans-serif;">Cloud</div>
<svg class="b" style="left:1006.8px;top:751.5px" width="12" height="12"><circle cx="6" cy="6" r="3.9" fill="#ffffff"/></svg>
<div class="t" style="left:1024.50px;top:751.00px;font-size:13px;line-height:13px;color:#dfe3e9;font-weight:400;font-family:'Liberation Sans', sans-serif;">General</div>
<div class="b" style="left:1116px;top:731.2px;width:34.7px;height:34.6px;border:1px solid #7a8799;border-radius:7px;box-sizing:border-box;"></div>
<svg class="b" style="left:1126.25px;top:745.20px" width="13.9" height="7.05" viewBox="0 0 13.9 7.05"><path d="M1.45 0.725 L6.95 5.6 L12.45 0.725" fill="none" stroke="#eef0f4" stroke-width="1.45" stroke-linecap="round" stroke-linejoin="round"/></svg>
<div class="b" style="left:1284.5px;top:741.2px;width:233.70000000000005px;height:15.2px;background:#364358;border-radius:7.6px;overflow:hidden;"></div>
<div class="b" style="left:1284.5px;top:741.2px;width:5.900000000000091px;height:15.2px;background:#9d93fe;border-radius:7.6px 0 0 7.6px;"></div>
<div class="b" style="left:1010.3px;top:226.2px;width:140.5px;height:259.5px;background:#0f1725;border:1px solid #5f6b7d;border-radius:7px;box-sizing:border-box;box-shadow:0 2px 6px rgba(0,0,0,0.35);"></div>
<div class="b" style="left:1014px;top:447px;width:132.5px;height:35px;background:#48536a;border-radius:5px;"></div>
<div class="b" style="left:1023.2px;top:239.0px;width:15.6px;height:15.4px;border:1.5px solid #6d7889;border-radius:3px;box-sizing:border-box;"></div>
<svg class="b" style="left:1043.8px;top:241.1px" width="12" height="12"><circle cx="6" cy="6" r="3.8" fill="#ffffff"/></svg>
<div class="t" style="left:1061.70px;top:240.20px;font-size:13px;line-height:13px;color:#dfe3e9;font-weight:400;font-family:'Liberation Sans', sans-serif;">Cloud</div>
<div class="b" style="left:1023.2px;top:275.25px;width:15.6px;height:15.4px;border:1.5px solid #6d7889;border-radius:3px;box-sizing:border-box;"></div>
<svg class="b" style="left:1043.8px;top:277.35px" width="12" height="12"><circle cx="6" cy="6" r="3.8" fill="#7e8892"/></svg>
<div class="t" style="left:1061.70px;top:276.45px;font-size:13px;line-height:13px;color:#dfe3e9;font-weight:400;font-family:'Liberation Sans', sans-serif;">Critical PoS</div>
<div class="b" style="left:1023.2px;top:311.5px;width:15.6px;height:15.4px;border:1.5px solid #6d7889;border-radius:3px;box-sizing:border-box;"></div>
<svg class="b" style="left:1043.8px;top:313.6px" width="12" height="12"><circle cx="6" cy="6" r="3.8" fill="#f0583c"/></svg>
<div class="t" style="left:1061.70px;top:312.70px;font-size:13px;line-height:13px;color:#dfe3e9;font-weight:400;font-family:'Liberation Sans', sans-serif;">Critical voice</div>
<div class="b" style="left:1023.2px;top:347.75px;width:15.6px;height:15.4px;border:1.5px solid #6d7889;border-radius:3px;box-sizing:border-box;"></div>
<svg class="b" style="left:1043.8px;top:349.85px" width="12" height="12"><circle cx="6" cy="6" r="3.8" fill="#ffffff"/></svg>
<div class="t" style="left:1061.70px;top:348.95px;font-size:13px;line-height:13px;color:#dfe3e9;font-weight:400;font-family:'Liberation Sans', sans-serif;">General</div>
<div class="b" style="left:1023.2px;top:384.0px;width:15.6px;height:15.4px;border:1.5px solid #6d7889;border-radius:3px;box-sizing:border-box;"></div>
<svg class="b" style="left:1043.8px;top:386.1px" width="12" height="12"><circle cx="6" cy="6" r="3.8" fill="#d46ab8"/></svg>
<div class="t" style="left:1061.70px;top:385.20px;font-size:13px;line-height:13px;color:#dfe3e9;font-weight:400;font-family:'Liberation Sans', sans-serif;">Suspect</div>
<div class="b" style="left:1023.2px;top:420.25px;width:15.6px;height:15.4px;border:1.5px solid #6d7889;border-radius:3px;box-sizing:border-box;"></div>
<svg class="b" style="left:1043.8px;top:422.35px" width="12" height="12"><circle cx="6" cy="6" r="3.8" fill="#f5a50b"/></svg>
<div class="t" style="left:1061.70px;top:421.45px;font-size:13px;line-height:13px;color:#dfe3e9;font-weight:400;font-family:'Liberation Sans', sans-serif;">Test</div>
<div class="b" style="left:1023.2px;top:456.5px;width:15.6px;height:15.4px;background:#2673f6;border-radius:3px;"></div>
<svg class="b" style="left:1023.2px;top:456.5px;" width="16" height="16" viewBox="0 0 16 16"><path d="M4.3 8 L6.8 10.5 L11.6 5.6" fill="none" stroke="#ffffff" stroke-width="1.2" stroke-linecap="round" stroke-linejoin="round"/></svg>
<svg class="b" style="left:1043.8px;top:458.6px" width="12" height="12"><circle cx="6" cy="6" r="3.8" fill="#7e8892"/></svg>
<div class="t" style="left:1061.70px;top:457.70px;font-size:13px;line-height:13px;color:#dfe3e9;font-weight:400;font-family:'Liberation Sans', sans-serif;">Trivial</div>
</body></html>
